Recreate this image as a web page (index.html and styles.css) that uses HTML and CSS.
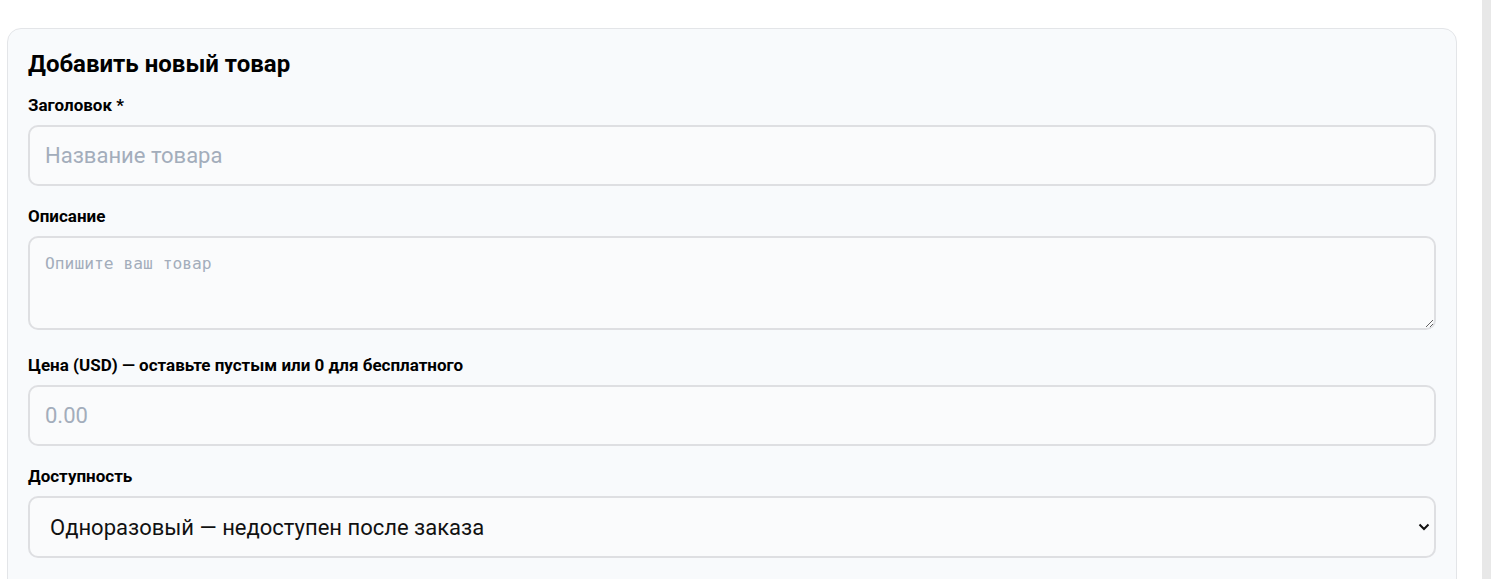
FILE: index.html
```html
<!DOCTYPE html>
<html lang="ru">
<head>
<meta charset="UTF-8">
<meta name="viewport" content="width=device-width, initial-scale=1.0">
<title>Добавить новый товар</title>
<link rel="stylesheet" href="styles.css">
</head>
<body>
  <div class="page">
    <main class="content">
      <form class="card" id="productForm">
        <h2 class="card-title">Добавить новый товар</h2>
        <div class="field">
          <label for="title">Заголовок *</label>
          <input type="text" id="title" class="control" placeholder="Название товара">
        </div>
        <div class="field field-area">
          <label for="description">Описание</label>
          <textarea id="description" class="control area" placeholder="Опишите ваш товар"></textarea>
        </div>
        <div class="field">
          <label for="price">Цена (USD) — оставьте пустым или 0 для бесплатного</label>
          <input type="text" id="price" class="control" placeholder="0.00">
        </div>
        <div class="field">
          <label for="availability">Доступность</label>
          <select id="availability" class="control select">
            <option value="once" selected>Одноразовый — недоступен после заказа</option>
            <option value="always">Многоразовый — всегда доступен</option>
          </select>
        </div>
      </form>
    </main>
    <div class="scroll-strip"></div>
  </div>
</body>
</html>
```
FILE: styles.css
```css
body {
  margin: 0;
  font-family: Roboto, "Noto Sans", sans-serif;
  background-color: #ffffff;
  color: #111;
}

.page {
  display: flex;
  height: 579px;
  overflow: hidden;
}

.content {
  flex: 1;
  padding: 28px 25px 0 7px;
}

.scroll-strip {
  width: 9px;
  background-color: #e8e8e8;
}

.card {
  border: 1px solid #e3e5e8;
  border-radius: 14px;
  background-color: #f8fafc;
  padding: 21px 20px 40px 20px;
}

.card-title {
  font-size: 24px;
  font-weight: 700;
  line-height: 28px;
  margin: 0 0 17px 0;
  color: #000;
}

.field {
  margin-bottom: 20px;
}

.field-area {
  margin-bottom: 25px;
}

.field label {
  display: block;
  font-size: 17px;
  line-height: 20px;
  font-weight: 700;
  margin-bottom: 10px;
  color: #000;
}

.control {
  display: block;
  width: 100%;
  box-sizing: border-box;
  height: 61px;
  padding: 0 15px;
  border: 2px solid #dedfe2;
  border-radius: 10px;
  background-color: #fafbfc;
  font-family: Roboto, "Noto Sans", sans-serif;
  font-size: 22px;
  color: #111;
  outline: none;
}

.control::placeholder {
  color: #a3adbb;
}

.area {
  height: 94px;
  padding: 16px 15px;
  font-family: "DejaVu Sans Mono", monospace;
  font-size: 16.3px;
  resize: vertical;
}

.select {
  height: 62px;
  padding: 0 40px 0 20px;
  appearance: none;
  -webkit-appearance: none;
  background-image: url("data:image/svg+xml;utf8,<svg xmlns='http://www.w3.org/2000/svg' width='12' height='8' viewBox='0 0 12 8'><path d='M1.5 1.5 L6 6 L10.5 1.5' fill='none' stroke='%23111' stroke-width='2'/></svg>");
  background-repeat: no-repeat;
  background-position: right 4px center;
  background-size: 12px 8px;
}
```
